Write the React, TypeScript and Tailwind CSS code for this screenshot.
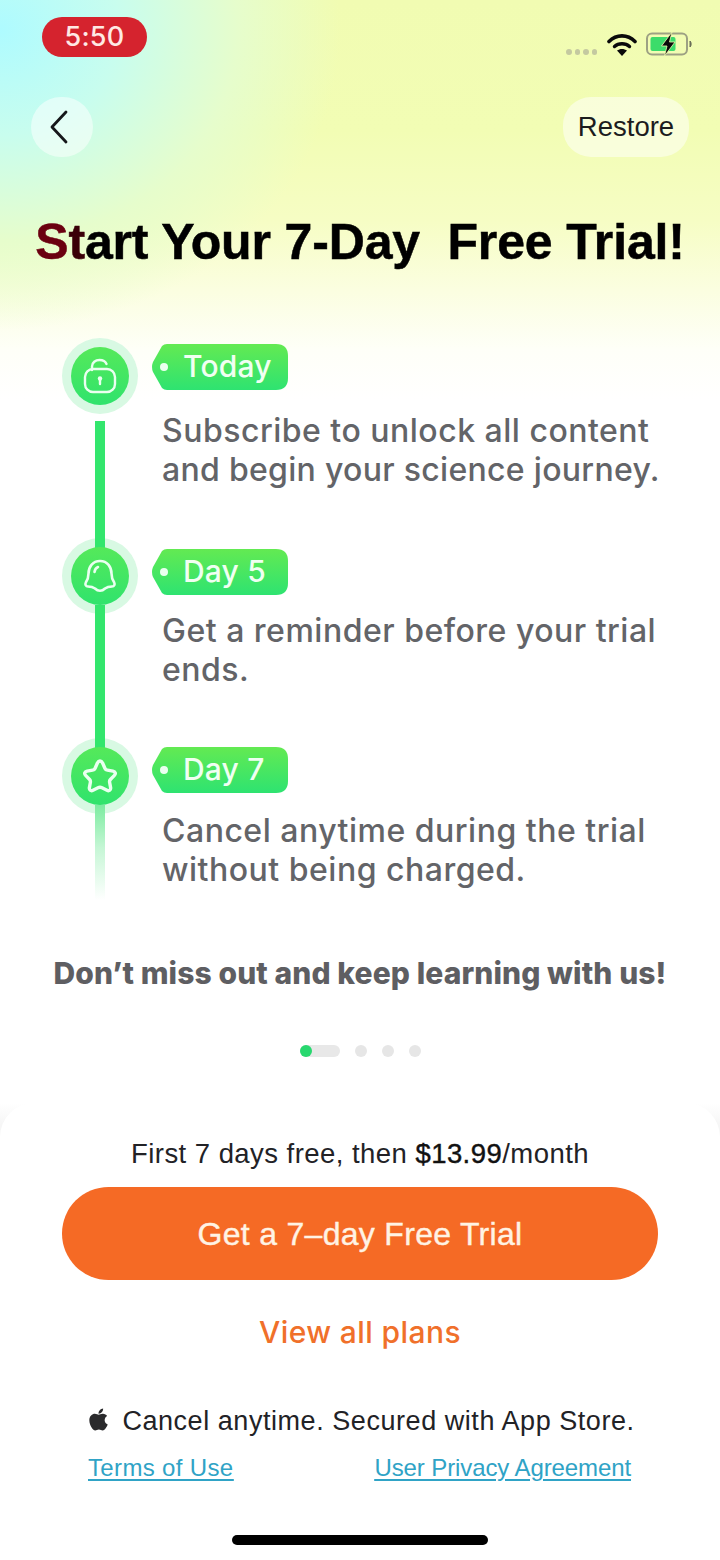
import React from "react";
import { FaApple } from "react-icons/fa";

const Tag = ({ label, id }: { label: string; id: string }) => (
  <div className="relative w-[137px] h-[46px] flex items-center">
    <svg className="absolute inset-0" width="137" height="46" viewBox="0 0 137 46">
      <defs>
        <linearGradient id={id} x1="0" y1="0" x2="0" y2="1">
          <stop offset="0" stopColor="#63ea52" />
          <stop offset="1" stopColor="#2ee371" />
        </linearGradient>
      </defs>
      <path d="M16 0H125Q137 0 137 12V34Q137 46 125 46H16Q13 46 11 44L2 28Q0 23 2 18L11 2Q13 0 16 0Z" fill={`url(#${id})`} />
    </svg>
    <span className="relative ml-[9px] w-[8px] h-[8px] rounded-full bg-[#eafff0]" />
    <span className="relative ml-[15px] -mt-[3px] text-[30px] leading-none font-medium tracking-[0.2px] text-[#f0fff2] font-['Inter',sans-serif]">{label}</span>
  </div>
);

const Badge = ({ children }: { children: React.ReactNode }) => (
  <div className="relative w-[76px] h-[76px] rounded-full flex items-center justify-center bg-[#d8f9e3]">
    <div className="relative z-20 w-[58px] h-[58px] rounded-full bg-[linear-gradient(180deg,#55e95a,#30e36d)] flex items-center justify-center">
      {children}
    </div>
  </div>
);

const Step = ({
  icon,
  label,
  id,
  lines,
  line,
  height,
  tagTop,
  textTop,
}: {
  icon: React.ReactNode;
  label: string;
  id: string;
  lines: React.ReactNode[];
  line: React.ReactNode;
  height: string;
  tagTop: string;
  textTop: string;
}) => (
  <div className={`flex ${height}`}>
    <div className="w-[76px] flex flex-col items-center">
      <Badge>{icon}</Badge>
      {line}
    </div>
    <div className={`ml-[13px] ${tagTop}`}>
      <Tag label={label} id={id} />
      <div className={`${textTop} ml-[11px] text-[#636468] text-[32px] leading-[39px] tracking-[0.5px] font-[450] font-['Inter',sans-serif] whitespace-nowrap`}>
        {lines.map((l, i) => (
          <div key={i}>{l}</div>
        ))}
      </div>
    </div>
  </div>
);

export default function App() {
  return (
    <div className="w-[720px] h-[1560px] flex flex-col overflow-hidden bg-white font-['Liberation_Sans',sans-serif] bg-[radial-gradient(ellipse_340px_300px_at_0px_30px,#aefbff_0%,#c8fdee_35%,#e6fdcc_70%,rgba(240,253,176,0)_100%),linear-gradient(180deg,#f1fcb2_0px,#f2fdb4_130px,#f6fdc4_220px,#fbfee0_290px,#fefff8_350px,#ffffff_400px)]">
      {/* status bar */}
      <div className="flex justify-between pl-[42px] pr-[28px] pt-[17px] h-[97px]">
        <div className="w-[105px] h-[40px] rounded-full bg-[#d5232e] flex items-center justify-center pt-[1px] text-[#ffe9e4] text-[27px] font-medium tracking-[0.2px] font-['Inter',sans-serif]">
          5:50
        </div>
        <div className="flex items-start pt-[15px]">
          <div className="flex gap-[3px] mt-[17px] mr-[10px]">
            <span className="w-[5.5px] h-[6px] rounded-full bg-[#c4c9a0]" />
            <span className="w-[5.5px] h-[6px] rounded-full bg-[#c4c9a0]" />
            <span className="w-[5.5px] h-[6px] rounded-full bg-[#c4c9a0]" />
            <span className="w-[5.5px] h-[6px] rounded-full bg-[#c4c9a0]" />
          </div>
          <svg width="30" height="23" viewBox="0 0 30 23" fill="none" className="mr-[9px] mt-[1px]">
            <path d="M2 8.5C9.5 1 20.5 1 28 8.5" stroke="#0a0a0a" strokeWidth="3.6" strokeLinecap="round" />
            <path d="M7.5 13.5C11.5 9.8 18.5 9.8 22.5 13.5" stroke="#0a0a0a" strokeWidth="3.4" strokeLinecap="round" />
            <path d="M15 23L10 17.6C12.8 15.3 17.2 15.3 20 17.6Z" fill="#0a0a0a" />
          </svg>
          <svg width="46" height="24" viewBox="0 0 46 24" fill="none">
            <rect x="1" y="1.5" width="40" height="21" rx="5" stroke="#9da183" strokeWidth="2" />
            <path d="M44 9C45.5 10 45.5 14 44 15Z" fill="#6b6e58" stroke="#6b6e58" strokeWidth="1" />
            <rect x="4.5" y="5" width="25" height="14" rx="2" fill="#3bdc6a" />
            <path d="M26 0L15.5 14H21L18.5 24L29 10H23.5Z" fill="#0a0a0a" stroke="#f1fdae" strokeWidth="0.8" />
          </svg>
        </div>
      </div>

      {/* nav */}
      <div className="flex justify-between pl-[31px] pr-[31px] h-[60px]">
        <button className="w-[62px] h-[60px] rounded-full bg-white/50 flex items-center justify-center">
          <svg width="20" height="34" viewBox="0 0 20 34" fill="none" className="-ml-[6px]">
            <path d="M17 2L3 17L17 32" stroke="#15171a" strokeWidth="2.8" strokeLinecap="round" strokeLinejoin="round" />
          </svg>
        </button>
        <button className="w-[126px] h-[60px] rounded-[28px] bg-white/50 flex items-center justify-center text-[27.5px] text-[#1c1c1e]">
          Restore
        </button>
      </div>

      {/* title */}
      <h1 className="mt-[57px] text-center text-[50px] leading-[56px] font-bold text-black whitespace-pre tracking-[-0.15px] [-webkit-text-stroke:0.5px_#000]">
        <span className="text-[#6b0010] [-webkit-text-stroke:0.5px_#6b0010]">S</span>
        <span className="text-[#3a0008] [-webkit-text-stroke:0.5px_#3a0008]">t</span>
        {"art Your 7-Day  Free Trial!"}
      </h1>

      {/* timeline */}
      <div className="mt-[68px] pl-[62px]">
        <Step
          id="g1"
          label="Today"
          height="h-[200px]"
          tagTop="pt-[6px]"
          textTop="mt-[21px]"
          lines={["Subscribe to unlock all content", <span className="tracking-[0.3px]">and begin your science journey.</span>]}
          line={<div className="relative z-10 mt-[7px] -mb-[10px] w-[10px] flex-1 bg-[#33e66d]" />}
          icon={
            <svg width="34" height="36" viewBox="0 0 34 36" fill="none" stroke="#eafff0" strokeWidth="2.4">
              <path d="M9 12V8.5C9 4.5 12.5 2 16.5 2C20 2 22.5 3.5 23.5 6" strokeLinecap="round" />
              <rect x="2" y="11" width="30" height="23" rx="8" />
              <circle cx="17" cy="20.5" r="2.2" fill="#eafff0" stroke="none" />
              <path d="M17 21V26" strokeLinecap="round" />
            </svg>
          }
        />
        <Step
          id="g2"
          label="Day 5"
          height="h-[200px]"
          tagTop="pt-[11px]"
          textTop="mt-[16px]"
          lines={["Get a reminder before your trial", "ends."]}
          line={<div className="relative z-10 -mt-[9px] -mb-[10px] w-[10px] flex-1 bg-[#33e66d]" />}
          icon={
            <svg width="34" height="36" viewBox="0 0 34 36" fill="none" stroke="#eafff0" strokeWidth="2.6" strokeLinejoin="round">
              <path d="M17 3C9.5 3 5.5 9 5.5 15.5C5.5 19.5 4.5 22 2.8 24.5C1.8 26.5 2.8 28.5 5 28.5C8 28.5 10 29 12 30.5C15 33.5 19 33.5 22 30.5C24 29 26 28.5 29 28.5C31.2 28.5 32.2 26.5 31.2 24.5C29.5 22 28.5 19.5 28.5 15.5C28.5 9 24.5 3 17 3Z" />
              <path d="M11.5 14C11.8 11.5 13 9.8 15 9" strokeLinecap="round" />
            </svg>
          }
        />
        <Step
          id="g3"
          label="Day 7"
          height="h-[162px]"
          tagTop="pt-[9px]"
          textTop="mt-[18px]"
          lines={["Cancel anytime during the trial", "without being charged."]}
          line={<div className="relative z-10 -mt-[9px] w-[10px] flex-1 bg-[linear-gradient(180deg,#7ceca0_0%,#c5f6d5_45%,#ffffff_100%)]" />}
          icon={
            <svg width="36" height="36" viewBox="0 0 36 36" fill="none" stroke="#eafff0" strokeWidth="3.4" strokeLinejoin="round">
              <path d="M18 3C19 3 20 3.8 20.6 5L23 10.5C23.5 11.6 24.3 12 25.4 12.2L31 13.2C33.4 13.7 34 15.8 32.4 17.4L28.4 21.5C27.6 22.4 27.4 23.2 27.6 24.3L28.6 29.6C29 32 27.2 33.4 25 32.3L20 29.8C18.6 29.1 17.4 29.1 16 29.8L11 32.3C8.8 33.4 7 32 7.4 29.6L8.4 24.3C8.6 23.2 8.4 22.4 7.6 21.5L3.6 17.4C2 15.8 2.6 13.7 5 13.2L10.6 12.2C11.7 12 12.5 11.6 13 10.5L15.4 5C16 3.8 17 3 18 3Z" />
            </svg>
          }
        />
      </div>

      <p className="mt-[56px] text-center text-[#5e5e62] text-[30px] leading-[34px] font-extrabold font-['Inter',sans-serif] tracking-[0.1px] whitespace-nowrap">
        Don’t miss out and keep learning with us!
      </p>

      {/* pager */}
      <div className="mt-[55px] flex items-center justify-center">
        <div className="w-[40px] h-[12px] rounded-full bg-[#e8e8e8]">
          <div className="w-[12px] h-[12px] rounded-full bg-[#28d86f]" />
        </div>
        <span className="ml-[15px] w-[12px] h-[12px] rounded-full bg-[#e6e6e6]" />
        <span className="ml-[15px] w-[12px] h-[12px] rounded-full bg-[#e6e6e6]" />
        <span className="ml-[15px] w-[12px] h-[12px] rounded-full bg-[#e6e6e6]" />
      </div>

      {/* sheet */}
      <div className="mt-[46px] flex-1 bg-[linear-gradient(180deg,#ffffff,#f6f6f6_22px)]">
        <div className="h-full rounded-t-[34px] bg-white flex flex-col items-center">
          <p className="mt-[34px] text-[27.5px] leading-[34px] tracking-[0.45px] text-[#222226]">
            First 7 days free, then <span className="text-[#111] [-webkit-text-stroke:0.4px_#111]">$13.99</span>/month
          </p>
          <button className="mt-[16px] w-[596px] h-[93px] rounded-full bg-[#f56a25] text-[#fff3e4] text-[32px] tracking-[0.3px] [-webkit-text-stroke:0.4px_#fff3e4]">
            Get a 7–day Free Trial
          </button>
          <a className="mt-[33px] text-[#f0702a] text-[30px] leading-[38px] tracking-[0.4px] font-medium font-['Inter',sans-serif]">View all plans</a>
          <div className="mt-[53px] ml-[1px] flex items-center text-[27px] leading-[34px] tracking-[0.55px] text-[#222226]">
            <FaApple className="text-[#2a2a2c] text-[25px] mr-[11px] -mt-[3px]" />
            Cancel anytime. Secured with App Store.
          </div>
          <div className="mt-[15px] w-full pl-[88px] pr-[89px] flex justify-between text-[24px] leading-[30px] text-[#2fa3c6] underline underline-offset-[3px]">
            <a className="tracking-[0.35px]">Terms of Use</a>
            <a className="tracking-[-0.1px]">User Privacy Agreement</a>
          </div>
          <div className="mt-[52px] w-[256px] h-[10px] rounded-full bg-black" />
        </div>
      </div>
    </div>
  );
}
